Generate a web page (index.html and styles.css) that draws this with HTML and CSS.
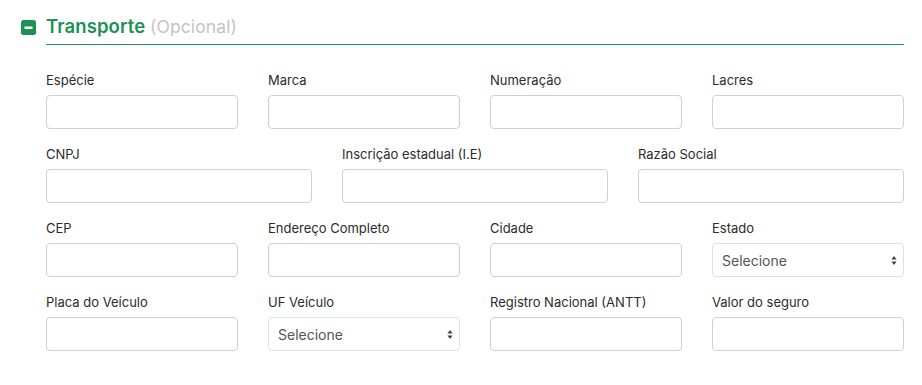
FILE: index.html
```html
<!DOCTYPE html>
<html lang="pt-BR">
<head>
<meta charset="utf-8">
<link rel="stylesheet" href="styles.css">
</head>
<body>
<section class="panel">
  <header class="head">
    <span class="toggle"><svg width="15" height="15" viewBox="0 0 15 15"><rect x="0" y="0" width="15" height="15" rx="2.5" fill="#1c9156"/><rect x="3.5" y="6.5" width="8" height="2.5" fill="#fff"/></svg></span>
    <h2 class="title">Transporte <span class="opt">(Opcional)</span></h2>
  </header>
  <div class="grid g4">
    <div class="field"><label>Espécie</label><input class="ctl"></div>
    <div class="field"><label>Marca</label><input class="ctl"></div>
    <div class="field"><label>Numeração</label><input class="ctl"></div>
    <div class="field"><label>Lacres</label><input class="ctl"></div>
  </div>
  <div class="grid g3">
    <div class="field"><label>CNPJ</label><input class="ctl"></div>
    <div class="field"><label>Inscrição estadual (I.E)</label><input class="ctl"></div>
    <div class="field"><label>Razão Social</label><input class="ctl"></div>
  </div>
  <div class="grid g4">
    <div class="field"><label>CEP</label><input class="ctl"></div>
    <div class="field"><label>Endereço Completo</label><input class="ctl"></div>
    <div class="field"><label>Cidade</label><input class="ctl"></div>
    <div class="field"><label>Estado</label><div class="ctl sel"><span>Selecione</span><svg width="6" height="11" viewBox="0 0 6 11"><path d="M3 1 L5.6 4.4 H0.4 Z M3 10 L5.6 6.6 H0.4 Z" fill="#444"/></svg></div></div>
  </div>
  <div class="grid g4">
    <div class="field"><label>Placa do Veículo</label><input class="ctl"></div>
    <div class="field"><label>UF Veículo</label><div class="ctl sel"><span>Selecione</span><svg width="6" height="11" viewBox="0 0 6 11"><path d="M3 1 L5.6 4.4 H0.4 Z M3 10 L5.6 6.6 H0.4 Z" fill="#444"/></svg></div></div>
    <div class="field"><label>Registro Nacional (ANTT)</label><input class="ctl"></div>
    <div class="field"><label>Valor do seguro</label><input class="ctl"></div>
  </div>
</section>
</body>
</html>
```

FILE: styles.css
```css
* { box-sizing: border-box; }
html, body { margin: 0; padding: 0; background: #fff; }
body { font-family: Inter, "Noto Sans", sans-serif; color: #333; }
.panel { padding: 14px 18px 0 21px; width: 922px; }
.head { display: flex; align-items: flex-start; }
.toggle { width: 15px; height: 15px; margin-top: 6px; margin-right: 10px; display: block; line-height: 0; }
.title {
  flex: 1; margin: 0; padding: 1px 0 7px 0; height: 31px;
  font-size: 18.5px; font-weight: 600; line-height: 22px;
  color: #1c9156; border-bottom: 1px solid #1c9a58;
  letter-spacing: 0.1px;
}
.opt { font-weight: 400; color: #c4c4c4; font-size: 17.5px; line-height: 1; }
.grid { display: grid; column-gap: 30px; margin-left: 25px; }
.grid.g4 { grid-template-columns: repeat(4, 192px); }
.grid.g3 { grid-template-columns: repeat(3, 266px); }
.head + .grid { margin-top: 27px; }
.field { display: flex; flex-direction: column; margin-bottom: 17px; }
label { font-size: 13px; line-height: 16px; height: 16px; margin-bottom: 7px; color: #2b2b2b; }
.ctl {
  height: 34px; width: 100%; border: 1px solid #cfcfcf; border-radius: 4px;
  background: #fff; font: inherit; padding: 0 10px; margin: 0;
}
.sel {
  display: flex; align-items: center; justify-content: space-between;
  border-color: #dbe1e8; background: #fff; font-size: 14px; color: #555;
  padding: 0 6px 0 9px;
}
```
